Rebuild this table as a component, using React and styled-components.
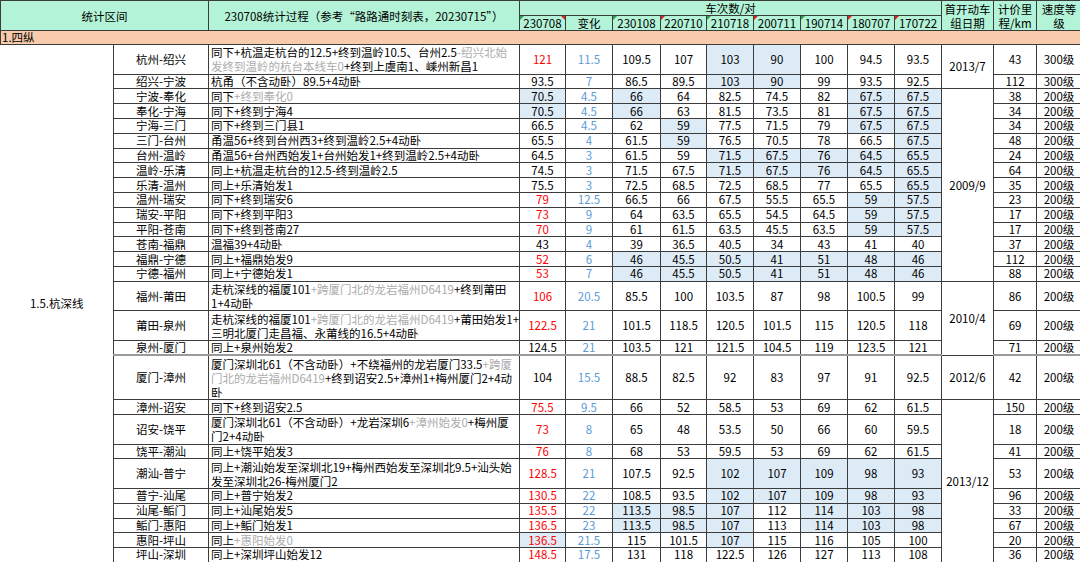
import React from 'react';
import styled, { createGlobalStyle } from 'styled-components';

const GlobalStyle = createGlobalStyle`
  html, body {
    margin: 0;
    background: #ffffff;
    overflow: hidden;
  }
`;

const Sheet = styled.table`
  border-collapse: collapse;
  table-layout: fixed;
  width: 1081px;
  font-family: 'Noto Sans CJK SC', 'Liberation Sans', sans-serif;
  font-size: 11.5px;
  line-height: 13px;
  color: #000;

  th,
  td {
    border: 1px solid #3c3c3c;
    padding: 0;
    overflow: hidden;
    white-space: nowrap;
    vertical-align: middle;
  }
`;

const Col = styled.col`
  width: ${(p) => p.$w}px;
`;

const HeadRow = styled.tr`
  height: 15px;
`;

const HeadCell = styled.th`
  position: relative;
  background: #b3f3d7;
  font-weight: 400;
  text-align: center;
  line-height: 14px;
`;

const Mark = styled.i`
  position: absolute;
  top: 0;
  ${(p) => p.$side}: 0;
  width: 0;
  height: 0;
  border-top: 4px solid ${(p) => p.$color};
  border-${(p) => (p.$side === 'left' ? 'right' : 'left')}: 4px solid transparent;
`;

const SectionRow = styled.tr`
  height: 14px;
`;

const SectionCell = styled.td`
  background: #f8cbad;
  text-align: left;
  padding-left: 1px !important;
`;

const Row = styled.tr`
  height: ${(p) => p.$u * 14.8}px;

  td {
    border-bottom: ${(p) => (p.$thick ? '2px solid #9a9a9a' : '1px solid #3c3c3c')};
  }
`;

const GroupCell = styled.td`
  text-align: center;
  border-left: none !important;
`;

const PairCell = styled.td`
  text-align: center;
`;

const ProcessCell = styled.td`
  text-align: left;
  padding-left: 2px !important;
  line-height: ${(p) => (p.$u > 1 ? 14 : 13)}px;
`;

const Muted = styled.span`
  color: #ababab;
`;

const NumCell = styled.td`
  text-align: center;
  color: ${(p) => (p.$tone === 'red' ? '#ff0000' : p.$tone === 'blue' ? '#5b9bd5' : '#000')};
  background: ${(p) => (p.$hl ? '#ddebf7' : '#ffffff')};
`;

const DateCell = styled.td`
  text-align: center;
`;

const widths = [113, 95, 311, 46, 47, 48, 46, 47, 47, 47, 47, 47, 52, 43, 45];

const years = [
  { t: '230708', marks: [['left', '#2e9e4a'], ['right', '#e02020']] },
  { t: '变化', marks: [] },
  { t: '230108', marks: [['left', '#2e9e4a']] },
  { t: '220710', marks: [['left', '#e02020']] },
  { t: '210718', marks: [['left', '#2e9e4a']] },
  { t: '200711', marks: [['left', '#e02020']] },
  { t: '190714', marks: [['left', '#2e9e4a']] },
  { t: '180707', marks: [['left', '#e02020']] },
  { t: '170722', marks: [['left', '#e02020']] },
];

const ALL = [0, 1, 2, 3, 4, 5, 6];

const rows = [
  { pair: '杭州-绍兴', u: 2, text: '同下+杭温走杭台的12.5+终到温岭10.5、台州2.5{-绍兴北始|发终到温岭的杭台本线车0}+终到上虞南1、嵊州新昌1', cur: '121', red: 1, chg: '11.5', nums: ['109.5', '107', '103', '90', '100', '94.5', '93.5'], hl: [2, 3], date: ['2013/7', 2], km: 43, sp: '300级' },
  { pair: '绍兴-宁波', text: '杭甬（不含动卧）89.5+4动卧', cur: '93.5', chg: '7', nums: ['86.5', '89.5', '103', '90', '99', '93.5', '92.5'], hl: [2, 3], km: 112, sp: '300级' },
  { pair: '宁波-奉化', text: '同下{+终到奉化0}', cur: '70.5', curHl: 1, chg: '4.5', nums: ['66', '64', '82.5', '74.5', '82', '67.5', '67.5'], hl: [0, 5, 6], date: ['2009/9', 13], km: 38 },
  { pair: '奉化-宁海', text: '同下+终到宁海4', cur: '70.5', curHl: 1, chg: '4.5', nums: ['66', '63', '81.5', '73.5', '81', '67.5', '67.5'], hl: [0, 5, 6], km: 34 },
  { pair: '宁海-三门', text: '同下+终到三门县1', cur: '66.5', chg: '4.5', nums: ['62', '59', '77.5', '71.5', '79', '67.5', '67.5'], hl: [1, 5, 6], km: 34 },
  { pair: '三门-台州', text: '甬温56+终到台州西3+终到温岭2.5+4动卧', cur: '65.5', chg: '4', nums: ['61.5', '59', '76.5', '70.5', '78', '66.5', '67.5'], hl: [1, 6], km: 48 },
  { pair: '台州-温岭', text: '甬温56+台州西始发1+台州始发1+终到温岭2.5+4动卧', cur: '64.5', chg: '3', nums: ['61.5', '59', '71.5', '67.5', '76', '64.5', '65.5'], hl: [2, 3, 4, 5, 6], km: 24 },
  { pair: '温岭-乐清', text: '同上+杭温走杭台的12.5-终到温岭2.5', cur: '74.5', chg: '3', nums: ['71.5', '67.5', '71.5', '67.5', '76', '64.5', '65.5'], hl: [2, 3, 4, 5, 6], km: 64 },
  { pair: '乐清-温州', text: '同上+乐清始发1', cur: '75.5', chg: '3', nums: ['72.5', '68.5', '72.5', '68.5', '77', '65.5', '65.5'], hl: [6], km: 35 },
  { pair: '温州-瑞安', text: '同下+终到瑞安6', cur: '79', red: 1, chg: '12.5', nums: ['66.5', '66', '67.5', '55.5', '65.5', '59', '57.5'], hl: [5, 6], km: 23 },
  { pair: '瑞安-平阳', text: '同下+终到平阳3', cur: '73', red: 1, chg: '9', nums: ['64', '63.5', '65.5', '54.5', '64.5', '59', '57.5'], hl: [5, 6], km: 17 },
  { pair: '平阳-苍南', text: '同下+终到苍南27', cur: '70', red: 1, chg: '9', nums: ['61', '61.5', '63.5', '45.5', '63.5', '59', '57.5'], hl: [5, 6], km: 17 },
  { pair: '苍南-福鼎', text: '温福39+4动卧', cur: '43', chg: '4', nums: ['39', '36.5', '40.5', '34', '43', '41', '40'], km: 37 },
  { pair: '福鼎-宁德', text: '同上+福鼎始发9', cur: '52', red: 1, chg: '6', nums: ['46', '45.5', '50.5', '41', '51', '48', '46'], hl: ALL, km: 112 },
  { pair: '宁德-福州', text: '同上+宁德始发1', cur: '53', red: 1, chg: '7', nums: ['46', '45.5', '50.5', '41', '51', '48', '46'], hl: ALL, km: 88 },
  { pair: '福州-莆田', u: 2, text: '走杭深线的福厦101{+跨厦门北的龙岩福州D6419}+终到莆田|1+4动卧', cur: '106', red: 1, chg: '20.5', nums: ['85.5', '100', '103.5', '87', '98', '100.5', '99'], date: ['2010/4', 3], km: 86 },
  { pair: '莆田-泉州', u: 2, text: '走杭深线的福厦101{+跨厦门北的龙岩福州D6419}+莆田始发1+|三明北厦门走昌福、永莆线的16.5+4动卧', cur: '122.5', red: 1, chg: '21', nums: ['101.5', '118.5', '120.5', '101.5', '115', '120.5', '118'], km: 69 },
  { pair: '泉州-厦门', text: '同上+泉州始发2', cur: '124.5', chg: '21', nums: ['103.5', '121', '121.5', '104.5', '119', '123.5', '121'], km: 71, thick: 1 },
  { pair: '厦门-漳州', u: 3, text: '厦门深圳北61（不含动卧）+不绕福州的龙岩厦门33.5{+跨厦|门北的龙岩福州D6419}+终到诏安2.5+漳州1+梅州厦门2+4动|卧', cur: '104', chg: '15.5', nums: ['88.5', '82.5', '92', '83', '97', '91', '92.5'], date: ['2012/6', 1], km: 42 },
  { pair: '漳州-诏安', text: '同下+终到诏安2.5', cur: '75.5', red: 1, chg: '9.5', nums: ['66', '52', '58.5', '53', '69', '62', '61.5'], date: ['2013/12', 9], km: 150 },
  { pair: '诏安-饶平', u: 2, text: '厦门深圳北61（不含动卧）+龙岩深圳6{+漳州始发0}+梅州厦|门2+4动卧', cur: '73', red: 1, chg: '8', nums: ['65', '48', '53.5', '50', '66', '60', '59.5'], km: 18 },
  { pair: '饶平-潮汕', text: '同上+饶平始发3', cur: '76', red: 1, chg: '8', nums: ['68', '53', '59.5', '53', '69', '62', '61.5'], km: 41 },
  { pair: '潮汕-普宁', u: 2, text: '同上+潮汕始发至深圳北19+梅州西始发至深圳北9.5+汕头始|发至深圳北26-梅州厦门2', cur: '128.5', red: 1, chg: '21', nums: ['107.5', '92.5', '102', '107', '109', '98', '93'], hl: [2, 3, 4, 5, 6], km: 53 },
  { pair: '普宁-汕尾', text: '同上+普宁始发2', cur: '130.5', red: 1, chg: '22', nums: ['108.5', '93.5', '102', '107', '109', '98', '93'], hl: [2, 3, 4, 5, 6], km: 96 },
  { pair: '汕尾-鲘门', text: '同上+汕尾始发5', cur: '135.5', red: 1, chg: '22', nums: ['113.5', '98.5', '107', '112', '114', '103', '98'], hl: [0, 1, 2, 4, 5, 6], km: 33 },
  { pair: '鲘门-惠阳', text: '同上+鲘门始发1', cur: '136.5', red: 1, chg: '23', nums: ['113.5', '98.5', '107', '113', '114', '103', '98'], hl: [0, 1, 2, 4, 5, 6], km: 67 },
  { pair: '惠阳-坪山', text: '同上{+惠阳始发0}', cur: '136.5', red: 1, curHl: 1, chg: '21.5', nums: ['115', '101.5', '107', '115', '116', '105', '100'], hl: [2], km: 20 },
  { pair: '坪山-深圳', text: '同上+深圳坪山始发12', cur: '148.5', red: 1, chg: '17.5', nums: ['131', '118', '122.5', '126', '127', '113', '108'], km: 36 },
];

// '{...}' marks grey text, '|' is a line break inside the cell
const renderProcess = (s) => {
  const out = [];
  let buf = '';
  let muted = false;
  const flush = () => {
    if (!buf) return;
    out.push(muted ? <Muted key={out.length}>{buf}</Muted> : <React.Fragment key={out.length}>{buf}</React.Fragment>);
    buf = '';
  };
  for (const ch of s) {
    if (ch === '{') {
      flush();
      muted = true;
    } else if (ch === '}') {
      flush();
      muted = false;
    } else if (ch === '|') {
      flush();
      out.push(<br key={out.length} />);
    } else {
      buf += ch;
    }
  }
  flush();
  return out;
};

const App = () => (
  <>
    <GlobalStyle />
    <Sheet>
      <colgroup>
        {widths.map((w, i) => (
          <Col key={i} $w={w} />
        ))}
      </colgroup>
      <thead>
        <HeadRow>
          <HeadCell colSpan={2} rowSpan={2}>统计区间</HeadCell>
          <HeadCell rowSpan={2}>230708统计过程（参考“路路通时刻表，20230715”）</HeadCell>
          <HeadCell colSpan={9}>车次数/对</HeadCell>
          <HeadCell rowSpan={2}>首开动车<br />组日期</HeadCell>
          <HeadCell rowSpan={2}>计价里<br />程/km</HeadCell>
          <HeadCell rowSpan={2}>速度等<br />级</HeadCell>
        </HeadRow>
        <HeadRow>
          {years.map(({ t, marks }) => (
            <HeadCell key={t}>
              {t}
              {marks.map(([side, color]) => (
                <Mark key={side} $side={side} $color={color} />
              ))}
            </HeadCell>
          ))}
        </HeadRow>
      </thead>
      <tbody>
        <SectionRow>
          <SectionCell colSpan={15}>1.四纵</SectionCell>
        </SectionRow>
        {rows.map((r, i) => {
          const hl = r.hl || [];
          return (
            <Row key={r.pair} $u={r.u || 1} $thick={r.thick}>
              {i === 0 && <GroupCell rowSpan={rows.length}>1.5.杭深线</GroupCell>}
              <PairCell>{r.pair}</PairCell>
              <ProcessCell $u={r.u || 1}>{renderProcess(r.text)}</ProcessCell>
              <NumCell $tone={r.red ? 'red' : ''} $hl={r.curHl}>{r.cur}</NumCell>
              <NumCell $tone="blue">{r.chg}</NumCell>
              {r.nums.map((n, j) => (
                <NumCell key={j} $hl={hl.includes(j)}>{n}</NumCell>
              ))}
              {r.date && <DateCell rowSpan={r.date[1]}>{r.date[0]}</DateCell>}
              <NumCell>{r.km}</NumCell>
              <NumCell>{r.sp || '200级'}</NumCell>
            </Row>
          );
        })}
      </tbody>
    </Sheet>
  </>
);

export default App;
